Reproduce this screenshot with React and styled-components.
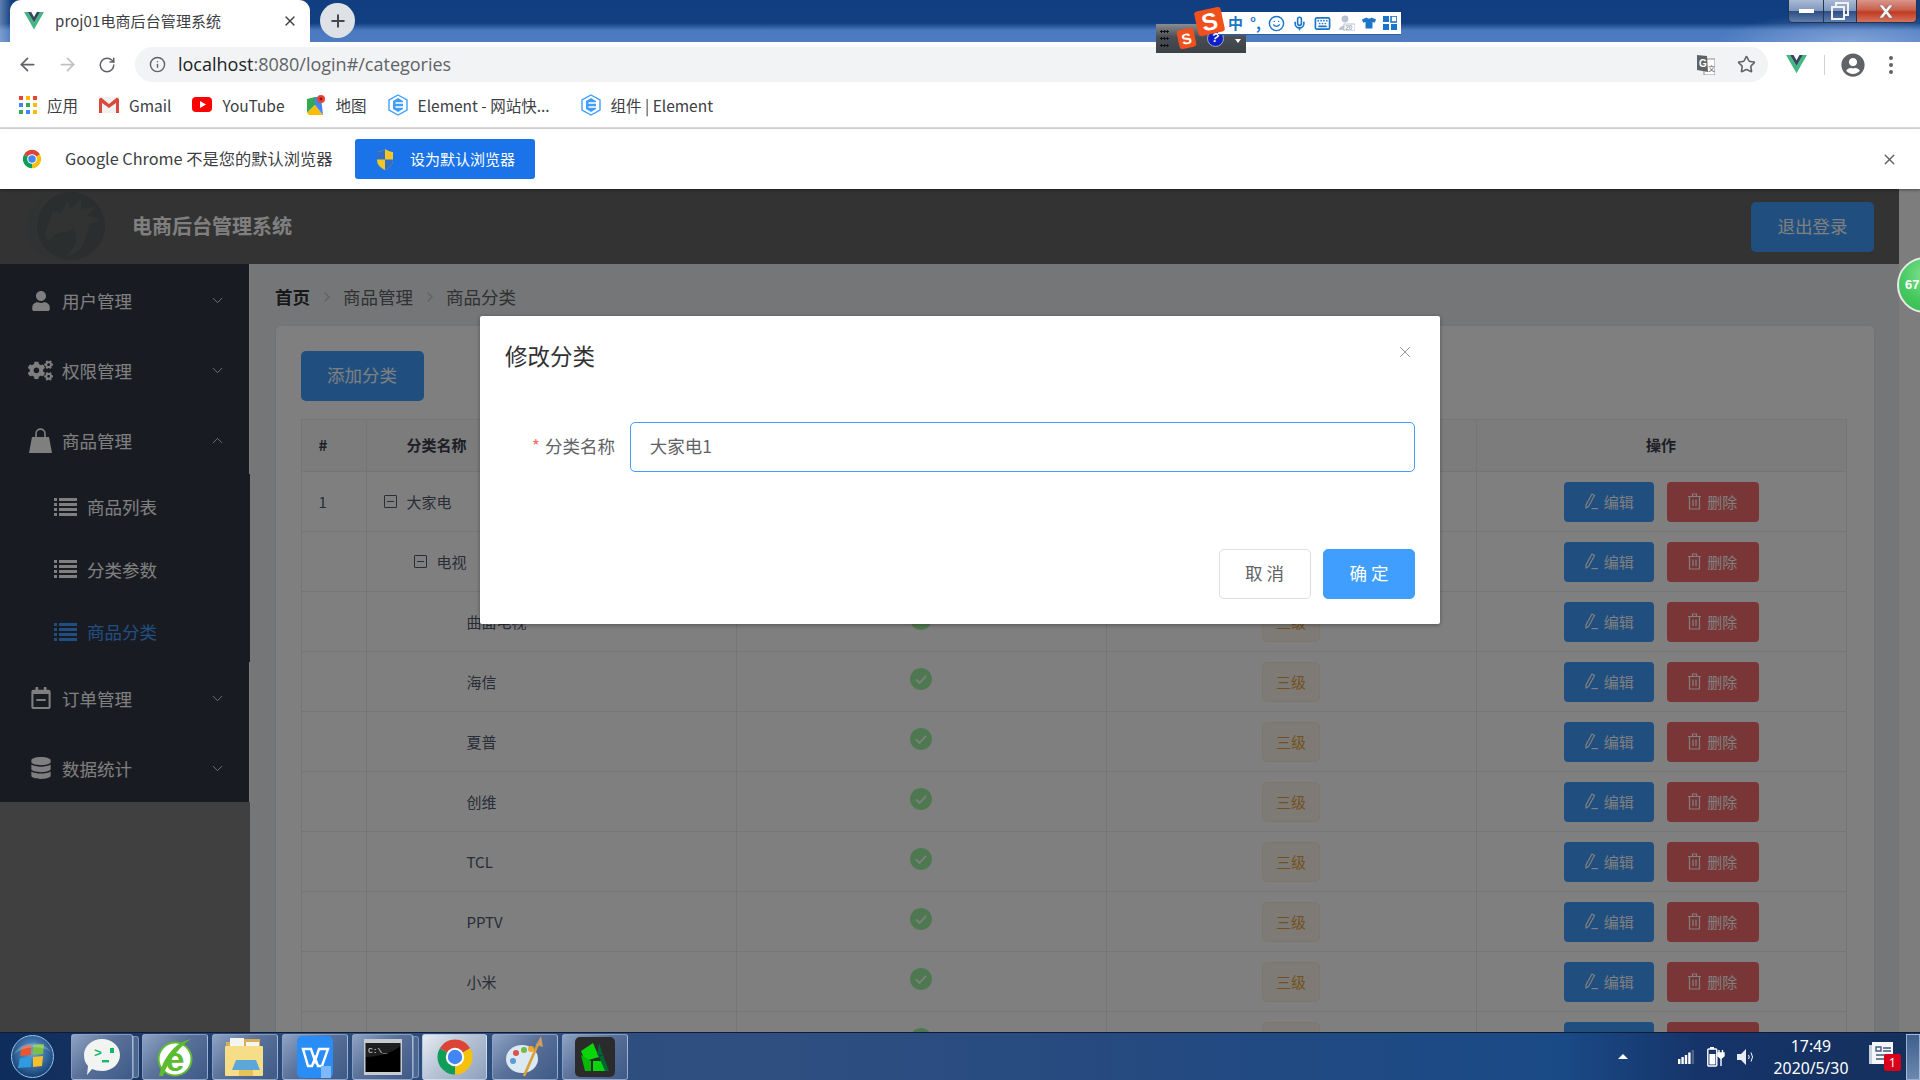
import React from 'react';
import styled, { createGlobalStyle } from 'styled-components';
import { ArrowLeft, ArrowRight, RotateCw, Info, Star, X, ChevronDown, ChevronUp, ChevronRight, Plus, Smile, Mic, Keyboard } from 'lucide-react';
import { FaUser, FaCogs, FaRegCalendarMinus, FaDatabase, FaTshirt, FaUserCircle } from 'react-icons/fa';

const GlobalStyle = createGlobalStyle`
  html, body { margin: 0; padding: 0; overflow: hidden; background: #000; }
  * { box-sizing: border-box; }
  body { font-family: "Noto Sans", "Noto Sans CJK SC", sans-serif; }
`;

const CJK = `"Noto Sans CJK SC", "Noto Sans", sans-serif`;

const Screen = styled.div`
  position: relative;
  width: 1920px;
  height: 1080px;
  display: flex;
  flex-direction: column;
  overflow: hidden;
`;

/* ---------- browser chrome ---------- */

const TabStrip = styled.div`
  height: 42px;
  flex: none;
  display: flex;
  align-items: flex-start;
  padding-left: 10px;
  background:
    radial-gradient(ellipse 130px 30px at 1850px 42px, rgba(190, 210, 240, 0.45), transparent),
    linear-gradient(90deg, rgba(170, 190, 220, 0.5) 0, transparent 12px),
    linear-gradient(180deg, #103e80 0, #113f81 55%, #4a79bf 72%, #4f7dc2 100%);
`;

const Tab = styled.div`
  width: 300px;
  height: 42px;
  background: #fff;
  border-radius: 11px 11px 0 0;
  display: flex;
  align-items: center;
  padding: 0 12px 0 14px;
  font-size: 15px;
  color: #3c4043;
  font-family: ${CJK};
`;

const TabTitle = styled.span`
  flex: 1;
  margin-left: 11px;
  padding-bottom: 2px;
  letter-spacing: 0.1px;
  white-space: nowrap;
`;

const NewTab = styled.div`
  width: 35px;
  height: 35px;
  margin: 3px 0 0 10px;
  border-radius: 50%;
  background: #dee1e6;
  color: #45494e;
  display: flex;
  align-items: center;
  justify-content: center;
`;

const WindowControls = styled.div`
  margin: 0 3px 0 auto;
  width: 129px;
  height: 23px;
  display: flex;
  border: 1px solid #26344e;
  border-top: none;
  border-radius: 0 0 5px 5px;
  overflow: hidden;
`;

const WinButton = styled.div`
  width: ${p => p.$w}px;
  display: flex;
  align-items: center;
  justify-content: center;
  border-right: ${p => (p.$close ? 'none' : '1px solid #26344e')};
  background: ${p => p.$close
    ? 'linear-gradient(180deg, #d9958a 0, #c8604e 45%, #c23a20 55%, #d4735f 100%)'
    : 'linear-gradient(180deg, #a9bad4 0, #7f97bd 48%, #2f4f84 52%, #5e7eae 100%)'};
`;

const Toolbar = styled.div`
  height: 42px;
  flex: none;
  background: #fff;
  display: flex;
  align-items: flex-start;
  padding-top: 5px;
  color: #5f6368;
`;

const NavButton = styled.div`
  width: 40px;
  height: 35px;
  display: flex;
  align-items: center;
  justify-content: center;
  color: ${p => (p.$off ? '#bdc1c6' : '#5f6368')};
`;

const NavGroup = styled.div`
  width: 135px;
  padding-left: 7px;
  display: flex;
`;

const Omnibox = styled.div`
  width: 1633px;
  height: 35px;
  border-radius: 18px;
  background: #f1f3f4;
  display: flex;
  align-items: center;
  padding: 0 12px 0 14px;
`;

const UrlText = styled.div`
  margin-left: 12px;
  padding-bottom: 2px;
  font-size: 18px;
  font-family: "Open Sans", sans-serif;
  color: #5f6368;
  flex: 1;
  b { font-weight: 400; color: #202124; }
`;

const OmniIcons = styled.div`
  display: flex;
  align-items: center;
  gap: 22px;
`;

const ToolIcons = styled.div`
  display: flex;
  align-items: center;
  height: 35px;
  padding-left: 18px;
`;

const ToolDivider = styled.div`
  width: 1px;
  height: 20px;
  background: #d0d2d5;
  margin: 0 16px 0 17px;
`;

const Dots = styled.div`
  margin-left: 24px;
  display: flex;
  flex-direction: column;
  gap: 3px;
  span { width: 4px; height: 4px; border-radius: 50%; background: #5f6368; display: block; }
`;

const BookmarkBar = styled.div`
  height: 45px;
  flex: none;
  background: #fff;
  border-bottom: 2px solid #dcdde0;
  display: flex;
  align-items: center;
  padding: 0 0 2px 19px;
  gap: 21px;
  font-size: 15.5px;
  color: #3c4043;
  font-family: ${CJK};
`;

const Bookmark = styled.div`
  display: flex;
  align-items: center;
  gap: 10px;
  min-width: ${p => p.$minW || 0}px;
  white-space: nowrap;
`;

const Infobar = styled.div`
  height: 60px;
  flex: none;
  background: #fff;
  display: flex;
  align-items: center;
  padding-left: 21px;
  font-family: ${CJK};
  font-size: 16.25px;
  color: #3c4043;
  position: relative;
  z-index: 1;
  box-shadow: 0 1px 3px rgba(0, 0, 0, 0.4);
`;

const InfoText = styled.span`
  width: 290px;
  margin-left: 22px;
  padding-bottom: 2px;
  white-space: nowrap;
`;

const DefaultButton = styled.div`
  width: 180px;
  height: 40px;
  border-radius: 3px;
  background: #1a73e8;
  color: #fff;
  display: flex;
  align-items: center;
  padding: 0 0 0 21px;
  gap: 16px;
  font-size: 15px;
  span { padding-bottom: 2px; }
`;

const InfoClose = styled.div`
  margin-left: auto;
  margin-right: 22px;
  color: #5f6368;
  display: flex;
`;

/* ---------- sogou ime bar, floats above the browser ---------- */

const ImeDock = styled.div`
  position: absolute;
  left: 1156px;
  top: 24px;
  width: 90px;
  height: 29px;
  background: linear-gradient(180deg, #8a8c90 0, #4a4e54 45%, #3c4047 100%);
  display: flex;
  align-items: center;
  padding-left: 4px;
  z-index: 5;
`;

const ImeGrip = styled.div`
  width: 9px;
  height: 21px;
  background: radial-gradient(circle, #111 1px, transparent 1.3px) 0 0 / 3px 7px;
`;

const ImeSmallS = styled.div`
  width: 17px;
  height: 19px;
  margin-left: 9px;
  border-radius: 3px;
  transform: rotate(-12deg);
  background: #f0501c;
  color: #fff;
  font: 700 15px/19px "Liberation Sans", sans-serif;
  text-align: center;
`;

const ImeHelp = styled.div`
  width: 17px;
  height: 17px;
  margin-left: 12px;
  border-radius: 50%;
  background: #1020c8;
  color: #fff;
  border: 1px solid #aab;
  font: italic 700 12px/15px "Liberation Sans", sans-serif;
  text-align: center;
`;

const ImeArrow = styled.div`
  width: 0;
  height: 0;
  margin-left: 11px;
  border: 3px solid transparent;
  border-top: 4px solid #fff;
  margin-top: 8px;
`;

const ImeBar = styled.div`
  position: absolute;
  left: 1218px;
  top: 12px;
  width: 183px;
  height: 22px;
  background: #fff;
  box-shadow: 0 1px 0 #2f5f9f;
  display: flex;
  align-items: center;
  padding-left: 10px;
  gap: 7px;
  color: #1b75c9;
  z-index: 6;
`;

const ImeLogo = styled.div`
  position: absolute;
  left: 1196px;
  top: 9px;
  width: 27px;
  height: 25px;
  border-radius: 3px;
  transform: rotate(-12deg);
  background: #f0501c;
  color: #fff;
  font: 700 24px/25px "Liberation Sans", sans-serif;
  text-align: center;
  z-index: 7;
`;

const ImeLabel = styled.span`
  font: 700 15px/22px ${CJK};
  white-space: nowrap;
`;

/* ---------- the admin page ---------- */

const PageArea = styled.div`
  position: relative;
  flex: 1;
  min-height: 0;
  display: flex;
  overflow: hidden;
  background: #fafafa;
`;

const AppColumn = styled.div`
  width: 1899px;
  flex: none;
  display: flex;
  flex-direction: column;
`;

const AppHeader = styled.header`
  height: 75px;
  flex: none;
  background: #666;
  display: flex;
  align-items: center;
  padding: 0 25px;
`;

const AppTitle = styled.div`
  margin-left: 25px;
  padding-bottom: 2px;
  font: 700 20px ${CJK};
  color: #fff;
`;

const BlockButton = styled.div`
  height: ${p => p.$h || 50}px;
  width: ${p => p.$w || 123}px;
  border-radius: 5px;
  background: #409eff;
  color: #fff;
  font: 17.5px ${CJK};
  padding-bottom: 3px;
  display: flex;
  align-items: center;
  justify-content: center;
  flex: none;
`;

const LogoutButton = styled(BlockButton)`
  margin-left: auto;
`;

const AppBody = styled.div`
  flex: 1;
  min-height: 0;
  display: flex;
`;

const Sidebar = styled.aside`
  width: 250px;
  flex: none;
  display: flex;
  flex-direction: column;
`;

const MenuItem = styled.div`
  width: 249px;
  height: 70px;
  background: #333744;
  color: #fff;
  display: flex;
  align-items: center;
  padding: 3px 23px 0 28px;
  font: 17.5px ${CJK};
`;

const MenuIcon = styled.span`
  width: 25px;
  margin-right: 9px;
  display: flex;
  justify-content: center;
`;

const MenuLabel = styled.span`
  flex: 1;
`;

const SubItem = styled.div`
  width: 250px;
  height: 62.5px;
  background: #333744;
  color: ${p => (p.$active ? '#409eff' : '#fff')};
  display: flex;
  align-items: center;
  padding: 3px 0 0 54px;
  gap: 10px;
  font: 17.5px ${CJK};
`;

const SideFiller = styled.div`
  flex: 1;
  background: #808080;
`;

const Main = styled.main`
  flex: 1;
  min-width: 0;
  background: #eaedf1;
  padding: 24px 25.5px 0;
`;

const Breadcrumb = styled.nav`
  display: flex;
  align-items: center;
  height: 18px;
  margin: 0 0 20px -0.5px;
  font: 17.5px/18px ${CJK};
  color: #606266;
  b { color: #303133; font-weight: 700; }
`;

const CrumbSep = styled.span`
  width: 33px;
  display: flex;
  justify-content: center;
  color: #c0c4cc;
`;

const Card = styled.section`
  background: #fff;
  border-radius: 5px;
  padding: 25px;
  box-shadow: 0 1px 2px rgba(0, 0, 0, 0.15);
`;

const Table = styled.div`
  margin-top: 18px;
  width: 1546px;
  border-top: 1px solid #e9eaec;
  border-left: 1px solid #e9eaec;
  border-right: 1px solid #e9eaec;
`;

const Row = styled.div`
  display: grid;
  grid-template-columns: 65px 370px 370px 370px 369px;
  height: ${p => (p.$head ? 52 : 60)}px;
  border-bottom: 1px solid #e9eaec;
  background: ${p => (p.$head ? '#f8f8f9' : '#fff')};
  font: ${p => (p.$head ? 700 : 400)} 15px ${CJK};
  color: ${p => (p.$head ? '#3c3f4d' : '#515a6e')};
`;

const Cell = styled.div`
  display: flex;
  align-items: center;
  justify-content: ${p => (p.$center ? 'center' : 'flex-start')};
  padding-left: ${p => p.$indent || 0}px;
  padding-bottom: ${p => (p.$head ? 2 : 0)}px;
  border-right: ${p => (p.$last ? 'none' : '1px solid #e9eaec')};
  gap: ${p => p.$gap || 0}px;
  min-width: 0;
`;

const TreeBox = styled.span`
  width: 13px;
  height: 13px;
  border: 1px solid #515a6e;
  border-radius: 1px;
  display: flex;
  align-items: center;
  justify-content: center;
  &::before { content: ""; width: 7px; height: 1px; background: #515a6e; }
`;

const CheckIcon = styled.svg`
  width: 22px;
  height: 22px;
  margin-bottom: 6px;
`;

const LevelTag = styled.span`
  width: 58px;
  height: 40px;
  border-radius: 5px;
  border: 1px solid ${p => p.$tone.border};
  background: ${p => p.$tone.bg};
  color: ${p => p.$tone.text};
  display: flex;
  align-items: center;
  justify-content: center;
`;

const ActionButton = styled.div`
  width: ${p => p.$w}px;
  height: 40px;
  border-radius: 4px;
  background: ${p => p.$bg};
  color: #fff;
  display: flex;
  align-items: center;
  justify-content: center;
  gap: 6px;
  font-size: 15px;
`;

const ActionCell = styled(Cell)`
  gap: 12.5px;
  padding-left: 1px;
`;

const ScrollTrack = styled.div`
  flex: 1;
  background: #fafafa;
`;

/* ---------- modal ---------- */

const Overlay = styled.div`
  position: absolute;
  inset: 0;
  background: rgba(0, 0, 0, 0.5);
  z-index: 2;
  padding-top: 127px;
`;

const Dialog = styled.div`
  position: relative;
  width: 960px;
  margin: 0 auto;
  background: #fff;
  border-radius: 2px;
  box-shadow: 0 1px 4px rgba(0, 0, 0, 0.35);
  font-family: ${CJK};
`;

const DialogHeader = styled.div`
  padding: 24px 25px 13.5px;
  font-size: 22.5px;
  line-height: 30px;
  color: #303133;
`;

const DialogClose = styled.div`
  position: absolute;
  top: 27px;
  right: 26px;
  display: flex;
  color: #909399;
`;

const DialogBody = styled.div`
  padding: 38px 25px 77px;
  display: flex;
  align-items: center;
`;

const FieldLabel = styled.label`
  width: 125px;
  flex: none;
  padding: 0 15px 2px 0;
  text-align: right;
  font-size: 17.5px;
  color: #606266;
  &::before { content: "*"; color: #f56c6c; margin-right: 5px; }
`;

const FieldInput = styled.input`
  flex: 1;
  height: 50px;
  border: 1.25px solid #409eff;
  border-radius: 5px;
  padding: 0 18.75px 2px;
  font: 17.5px ${CJK};
  color: #606266;
  outline: none;
`;

const DialogFooter = styled.div`
  padding: 0 25px 25px;
  display: flex;
  justify-content: flex-end;
  gap: 12.5px;
`;

const DialogButton = styled.div`
  width: 92px;
  height: 50px;
  border-radius: 5px;
  border: 1.25px solid ${p => (p.$primary ? '#409eff' : '#dcdfe6')};
  background: ${p => (p.$primary ? '#409eff' : '#fff')};
  color: ${p => (p.$primary ? '#fff' : '#606266')};
  font-size: 17.5px;
  padding-bottom: 2px;
  white-space: pre;
  display: flex;
  align-items: center;
  justify-content: center;
`;

const SpeedBall = styled.div`
  position: absolute;
  left: 1897px;
  top: 68px;
  width: 56px;
  height: 56px;
  border-radius: 50%;
  border: 2px solid #e8e8e8;
  background: radial-gradient(circle at 50% 30%, #7fe08f 0, #45c95f 55%, #35b850 100%);
  color: #fff;
  font: 700 13px/52px "Liberation Sans", sans-serif;
  padding-left: 6px;
  z-index: 3;
`;

/* ---------- windows taskbar ---------- */

const Taskbar = styled.div`
  height: 48px;
  flex: none;
  display: flex;
  align-items: center;
  border-top: 1px solid #0d1d38;
  background:
    linear-gradient(90deg, #0e2c5c 0, #14305e 70px, #2c4c7c 300px, #2f4f80 760px, #264a80 1100px, #1a4a86 1560px, #16346a 1700px, #14305c 1920px);
  position: relative;
  z-index: 4;
`;

const StartArea = styled.div`
  width: 71px;
  flex: none;
  display: flex;
  justify-content: center;
  padding-right: 6px;
`;

const TaskButton = styled.div`
  position: relative;
  width: ${p => p.$w}px;
  height: 46px;
  margin-right: ${p => p.$gap}px;
  flex: none;
  border: 1px solid rgba(200, 215, 240, 0.5);
  border-radius: 3px;
  display: flex;
  align-items: center;
  justify-content: center;
  background: ${p => (p.$active
    ? 'linear-gradient(135deg, #e6ebf2 0, #b8c4d6 45%, #8ea0bc 100%)'
    : 'linear-gradient(135deg, #8ea3c4 0, #5a7199 45%, #3e5a88 100%)')};
  ${p => p.$stacked && `
    &::after {
      content: "";
      position: absolute;
      top: 1px;
      bottom: 1px;
      right: -7px;
      width: 4px;
      border: 1px solid rgba(200, 215, 240, 0.4);
      border-radius: 0 3px 3px 0;
      background: #4b668f;
    }
  `}
`;

const Tray = styled.div`
  margin-left: auto;
  display: flex;
  align-items: center;
  color: #fff;
  height: 100%;
`;

const TrayArrow = styled.div`
  width: 0;
  height: 0;
  border: 5px solid transparent;
  border-bottom: 5px solid #fff;
  border-top: none;
  margin-right: 50px;
`;

const TrayIcon = styled.div`
  display: flex;
  margin-right: ${p => p.$gap}px;
`;

const Clock = styled.div`
  width: 90px;
  text-align: center;
  font-size: 15.75px;
  line-height: 22px;
  margin-right: 13px;
  padding-top: 1px;
`;

const Notify = styled.div`
  position: relative;
  width: 34px;
  height: 30px;
  display: flex;
  align-items: flex-start;
`;

const NotifyBadge = styled.span`
  position: absolute;
  left: 15px;
  top: 12px;
  width: 17px;
  height: 17px;
  background: #d9001b;
  border-radius: 2px;
  font-size: 12px;
  line-height: 17px;
  text-align: center;
`;

const ShowDesktop = styled.div`
  width: 14px;
  height: 46px;
  margin-left: 3px;
  border: 1px solid rgba(210, 225, 245, 0.6);
  background: linear-gradient(180deg, #3f5f8c, #6c88b0);
`;

/* ---------- drawn icons and logos ---------- */

const VueLogo = ({ size = 20 }) => (
  <svg width={size} height={size * 0.87} viewBox="0 0 24 21">
    <polygon points="0,0 4.6,0 12,12.6 19.4,0 24,0 12,21" fill="#41b883" />
    <polygon points="4.6,0 8.6,0 12,6 15.4,0 19.4,0 12,12.6" fill="#34495e" />
  </svg>
);

const ChromeLogo = ({ size = 22 }) => (
  <svg width={size} height={size} viewBox="0 0 48 48">
    <path d="M24 24 L6.68 14 A20 20 0 0 1 41.32 14 Z" fill="#db4437" />
    <path d="M24 24 L41.32 14 A20 20 0 0 1 24 44 Z" fill="#f4c20d" />
    <path d="M24 24 L24 44 A20 20 0 0 1 6.68 14 Z" fill="#0f9d58" />
    <circle cx="24" cy="24" r="10.5" fill="#fff" />
    <circle cx="24" cy="24" r="8.2" fill="#4285f4" />
  </svg>
);

const AppsGrid = () => {
  const colors = ['#ea4335', '#fbbc05', '#ea4335', '#4285f4', '#34a853', '#fbbc05', '#34a853', '#4285f4', '#fbbc05'];
  return (
    <svg width="18" height="18" viewBox="0 0 18 18">
      {colors.map((c, i) => (
        <rect key={i} x={(i % 3) * 7} y={Math.floor(i / 3) * 7} width="4" height="4" fill={c} />
      ))}
    </svg>
  );
};

const GmailIcon = () => (
  <svg width="20" height="16" viewBox="0 0 20 16">
    <rect width="20" height="16" rx="1" fill="#f1f1f1" />
    <path d="M0 2 V16 H3 V6 L10 11 L17 6 V16 H20 V2 L18 0.5 L10 7 L2 0.5 Z" fill="#d9493c" />
  </svg>
);

const YoutubeIcon = () => (
  <svg width="20" height="15" viewBox="0 0 20 15">
    <rect width="20" height="15" rx="4" fill="#f00" />
    <polygon points="8,4 8,11 14,7.5" fill="#fff" />
  </svg>
);

const MapsIcon = () => (
  <svg width="20" height="20" viewBox="0 0 20 20">
    <polygon points="1,4 9,2 9,10 1,18" fill="#34a853" />
    <polygon points="1,18 9,10 17,20 3,20" fill="#fbbc05" />
    <polygon points="9,2 15,2 17,20 9,10" fill="#4285f4" />
    <circle cx="15" cy="4" r="4" fill="#ea4335" />
    <circle cx="15" cy="4" r="1.4" fill="#8a1c14" />
  </svg>
);

const ElementLogo = () => (
  <svg width="20" height="22" viewBox="0 0 20 22">
    <polygon points="10,1 19,6 19,16 10,21 1,16 1,6" fill="#fff" stroke="#409eff" strokeWidth="1.4" />
    <polygon points="10,4 15,7 15,15 10,18 5,15 5,7" fill="#409eff" />
    <path d="M7.5 9 H15 M7.5 13 H15" stroke="#fff" strokeWidth="1.6" />
  </svg>
);

const ShieldIcon = () => (
  <svg width="18" height="21" viewBox="0 0 18 21">
    <path d="M9 0 C6 2 3 3 1 3 V11 C1 16 5 19 9 21 C13 19 17 16 17 11 V3 C15 3 12 2 9 0 Z" fill="#f3c623" />
    <path d="M9 0 C6 2 3 3 1 3 V10.5 H9 Z" fill="#2f6fc9" />
    <path d="M9 10.5 H17 V11 C17 16 13 19 9 21 Z" fill="#2f6fc9" />
  </svg>
);

const TranslateIcon = () => (
  <svg width="18" height="20" viewBox="0 0 18 20">
    <rect x="7" y="4" width="11" height="16" fill="#fff" stroke="#8a8d91" />
    <polygon points="0,0 10,1 11,17 0,15" fill="#5f6368" />
    <text x="2" y="12" fontSize="10" fontWeight="700" fill="#fff" fontFamily="Liberation Sans">G</text>
    <text x="11" y="16" fontSize="7" fill="#5f6368" fontFamily="Noto Sans CJK SC">文</text>
  </svg>
);

const ListIcon = () => (
  <svg width="23" height="18" viewBox="0 0 23 18" fill="currentColor">
    {[0, 5, 10, 15].map(y => (
      <React.Fragment key={y}>
        <rect x="0" y={y} width="3" height="3" />
        <rect x="5" y={y} width="18" height="3" />
      </React.Fragment>
    ))}
  </svg>
);

const BagIcon = () => (
  <svg width="23" height="25" viewBox="0 0 23 25" fill="currentColor">
    <path d="M3 9 H20 L23 25 H0 Z" />
    <path d="M7 12 V6 C7 -0.5 16 -0.5 16 6 V12" fill="none" stroke="currentColor" strokeWidth="1.6" />
  </svg>
);

const EditIcon = () => (
  <svg width="13" height="17" viewBox="0 0 13 17" fill="none" stroke="#fff" strokeWidth="1.2">
    <path d="M7 1 L9.5 2.5 L3.5 13.5 L1 15 L1 12 Z" />
    <path d="M6.5 15.6 H13" />
  </svg>
);

const TrashIcon = () => (
  <svg width="13" height="17" viewBox="0 0 13 17" fill="none" stroke="#fff" strokeWidth="1.2">
    <path d="M0 3.5 H13 M4.5 3.5 V1 H8.5 V3.5 M1.5 3.5 V16 H11.5 V3.5 M5 6.5 V13 M8 6.5 V13" />
  </svg>
);

const SuccessIcon = () => (
  <CheckIcon viewBox="0 0 22 22">
    <circle cx="11" cy="11" r="11" fill="#9cf2a0" />
    <path d="M6 11.5 L9.6 15 L16 7.8" fill="none" stroke="#fff" strokeWidth="1.8" />
  </CheckIcon>
);

const HorseLogo = () => (
  <svg width="82" height="71" viewBox="0 0 82 71">
    <path d="M24 3 C6 10 -3 32 4 50 C11 66 30 72 46 68 C34 68 18 60 12 44 C7 28 13 12 24 3 Z" fill="#5f6666" />
    <circle cx="46" cy="35" r="34" fill="#555c5c" />
    <path d="M20 42 L28 20 L36 22 L42 10 L46 17 L56 8 L56 18 L70 16 L62 25 L76 28 L64 34 L60 48 C58 58 50 64 40 66 C52 56 54 46 48 36 C44 44 36 38 28 46 L23 50 Z" fill="#626666" />
  </svg>
);

const ImeUserIcon = () => (
  <svg width="17" height="16" viewBox="0 0 17 16">
    <circle cx="7" cy="4" r="3.4" fill="#b9c3d2" />
    <path d="M1 15 C1 9 13 9 13 15 Z" fill="#b9c3d2" />
    <rect x="6" y="9" width="11" height="7" fill="#fff" stroke="#b9c3d2" />
    <text x="7.2" y="15" fontSize="6.5" fontWeight="700" fill="#a3afc0" fontFamily="Liberation Sans">20</text>
  </svg>
);

const OrbIcon = () => (
  <svg width="43" height="43" viewBox="0 0 43 43">
    <defs>
      <radialGradient id="orbFill" cx="50%" cy="40%" r="60%">
        <stop offset="0%" stopColor="#6aa6dc" />
        <stop offset="100%" stopColor="#123e72" />
      </radialGradient>
    </defs>
    <circle cx="21.5" cy="21.5" r="21" fill="url(#orbFill)" stroke="#9cc3e6" strokeWidth="1" />
    <polygon points="11,12 20,10 20,20 9,21" fill="#e8552e" />
    <polygon points="22,10 33,9 32,19 22,20" fill="#7cc043" />
    <polygon points="9,23 20,22 20,32 7,33" fill="#2f9be0" />
    <polygon points="22,22 32,21 31,31 22,32" fill="#f6c02c" />
    <path d="M3 19 C10 6 32 4 40 17 C30 10 14 11 3 19 Z" fill="#fff" opacity="0.22" />
  </svg>
);

const ChatIcon = () => (
  <svg width="40" height="40" viewBox="0 0 40 40">
    <path d="M20 2 C30 2 38 9 38 18 C38 27 30 34 20 34 C16 34 13 33 10 32 L5 38 L6 29 C3 26 2 22 2 18 C2 9 10 2 20 2 Z" fill="#f2f4f2" />
    <text x="12" y="20" fontSize="13" fontWeight="700" fill="#14b86a" fontFamily="Liberation Mono">&gt;</text>
    <rect x="28" y="11" width="4" height="5" fill="#14b86a" />
    <rect x="20" y="23" width="7" height="2.4" fill="#14b86a" />
  </svg>
);

const IeIcon = () => (
  <svg width="40" height="42" viewBox="0 0 40 42">
    <ellipse cx="20" cy="23" rx="16.5" ry="16.5" fill="#fff" stroke="#5cbb2e" strokeWidth="2" />
    <text x="20" y="35" textAnchor="middle" fontSize="34" fontWeight="700" fill="#5cbb2e" fontFamily="Liberation Sans">e</text>
    <path d="M4 40 C8 22 20 6 36 3 C28 8 14 22 8 40 Z" fill="#5cbb2e" />
  </svg>
);

const FolderIcon = () => (
  <svg width="42" height="42" viewBox="0 0 42 42">
    <path d="M2 6 H16 L19 3 H36 V40 H2 Z" fill="#d9ae55" />
    <rect x="6" y="2" width="14" height="8" fill="#f5f5f0" />
    <rect x="22" y="6" width="13" height="7" fill="#f5f5f0" />
    <rect x="1" y="10" width="38" height="30" rx="1" fill="#f6dd88" />
    <path d="M8 34 L12 24 H32 L36 34 Z" fill="#5aa7d8" />
    <rect x="15" y="34" width="14" height="6" fill="#e7c159" />
  </svg>
);

const WpsIcon = () => (
  <svg width="36" height="42" viewBox="0 0 36 42">
    <rect width="36" height="42" rx="5" fill="#2a8cf5" />
    <path d="M6 13 H14 L18 25 L22 13 H31 L25 30 H21 L18 22 L15 30 H11 Z" fill="none" stroke="#fff" strokeWidth="2.4" />
    <rect x="24" y="30" width="10" height="12" fill="#7cb8fb" />
  </svg>
);

const CmdIcon = () => (
  <svg width="38" height="36" viewBox="0 0 38 36">
    <rect width="38" height="36" fill="#c8ccd0" />
    <rect x="1.5" y="4" width="35" height="29" fill="#000" />
    <text x="4" y="14" fontSize="8" fill="#e6e6e6" fontFamily="Liberation Mono">C:\_</text>
    <path d="M1.5 33 V18 C14 18 28 14 36.5 7 V4 H1.5 Z" fill="#fff" opacity="0.12" />
  </svg>
);

const PaletteIcon = () => (
  <svg width="42" height="42" viewBox="0 0 42 42">
    <ellipse cx="18" cy="23" rx="16" ry="14" fill="#dce8f2" />
    <circle cx="12" cy="17" r="3" fill="#d9534f" />
    <circle cx="20" cy="14" r="3" fill="#73b84a" />
    <circle cx="9" cy="25" r="3" fill="#5a9bd8" />
    <circle cx="27" cy="13" r="3" fill="#f0a92c" />
    <path d="M20 40 L34 8" stroke="#d9a13a" strokeWidth="2.6" />
    <path d="M32 9 L37 0 L39 11 Z" fill="#cf9d5f" />
  </svg>
);

const GreenAppIcon = () => (
  <svg width="40" height="40" viewBox="0 0 40 40">
    <rect width="40" height="40" rx="5" fill="#2b2b2b" />
    <polygon points="6,14 18,6 24,20 10,24" fill="#0ad40a" />
    <polygon points="6,18 16,24 16,34 10,34" fill="#08b808" />
    <polygon points="18,24 28,24 32,34 18,34" fill="#0ad40a" />
    <polygon points="24,6 28,18 22,18" fill="#063" />
    <polygon points="28,18 34,34 30,34 24,20" fill="#063" />
  </svg>
);

const SignalIcon = () => (
  <svg width="16" height="14" viewBox="0 0 16 14">
    <rect x="0" y="9" width="2.4" height="5" fill="#fff" />
    <rect x="3.4" y="7" width="2.4" height="7" fill="#fff" />
    <rect x="6.8" y="5" width="2.4" height="9" fill="#fff" />
    <rect x="10.2" y="2.5" width="2.4" height="11.5" fill="#fff" />
    <rect x="13.6" y="0" width="2.4" height="14" fill="#4d6488" />
  </svg>
);

const BatteryIcon = () => (
  <svg width="18" height="20" viewBox="0 0 18 20">
    <rect x="0.8" y="2" width="9" height="17" rx="1" fill="none" stroke="#fff" strokeWidth="1.4" />
    <rect x="3" y="0" width="4" height="2" fill="#fff" />
    <rect x="2.4" y="7" width="6" height="10.5" fill="#fff" />
    <path d="M12 3 V6 M15.5 3 V6 M11 6 H17 V9 L14.5 11 H13.5 L11 9 Z M14 11 V19" stroke="#fff" strokeWidth="1.4" fill="#fff" />
  </svg>
);

const SpeakerIcon = () => (
  <svg width="18" height="18" viewBox="0 0 18 18">
    <polygon points="0,6 4,6 9,1 9,17 4,12 0,12" fill="#e8ecf2" />
    <path d="M11.5 7 Q13 9 11.5 11 M14 4.5 Q17 9 14 13.5" fill="none" stroke="#fff" strokeWidth="1" />
  </svg>
);

const NotifyIcon = () => (
  <svg width="24" height="23" viewBox="0 0 24 23">
    <rect x="0" y="3" width="4" height="19" fill="#c6cfdc" />
    <rect x="3" y="0" width="21" height="22" fill="#f4f6f9" />
    <path d="M7 5 H12 V9 H7 Z M14 6 H22 M14 9 H22 M7 13 H22 M7 17 H16" stroke="#44597c" strokeWidth="1.4" fill="none" />
  </svg>
);

/* ---------- data ---------- */

const menus = [
  { name: '用户管理', icon: <FaUser size={20} /> },
  { name: '权限管理', icon: <FaCogs size={25} /> },
  {
    name: '商品管理',
    icon: <BagIcon />,
    open: true,
    children: [
      { name: '商品列表' },
      { name: '分类参数' },
      { name: '商品分类', active: true },
    ],
  },
  { name: '订单管理', icon: <FaRegCalendarMinus size={22} /> },
  { name: '数据统计', icon: <FaDatabase size={22} /> },
];

const tones = {
  一级: { bg: '#ecf5ff', border: '#d9ecff', text: '#409eff' },
  二级: { bg: '#f0f9eb', border: '#e1f3d8', text: '#67c23a' },
  三级: { bg: '#fdf6ec', border: '#faecd8', text: '#e6a23c' },
};

const rows = [
  { index: 1, name: '大家电', level: '一级', indent: 17, tree: true },
  { name: '电视', level: '二级', indent: 47, tree: true },
  { name: '曲面电视', level: '三级', indent: 100 },
  { name: '海信', level: '三级', indent: 100 },
  { name: '夏普', level: '三级', indent: 100 },
  { name: '创维', level: '三级', indent: 100 },
  { name: 'TCL', level: '三级', indent: 100 },
  { name: 'PPTV', level: '三级', indent: 100 },
  { name: '小米', level: '三级', indent: 100 },
  { name: '海尔', level: '三级', indent: 100 },
];

const taskButtons = [
  { w: 62, gap: 9, icon: <ChatIcon />, stacked: true },
  { w: 66, gap: 4, icon: <IeIcon /> },
  { w: 66, gap: 4, icon: <FolderIcon /> },
  { w: 66, gap: 4, icon: <WpsIcon /> },
  { w: 61, gap: 9, icon: <CmdIcon />, stacked: true },
  { w: 65, gap: 5, icon: <ChromeLogo size={42} />, active: true },
  { w: 66, gap: 4, icon: <PaletteIcon /> },
  { w: 66, gap: 0, icon: <GreenAppIcon /> },
];

const App = () => (
  <Screen>
    <GlobalStyle />

    <TabStrip>
      <Tab>
        <VueLogo />
        <TabTitle>proj01电商后台管理系统</TabTitle>
        <X size={16} strokeWidth={2} />
      </Tab>
      <NewTab><Plus size={20} strokeWidth={2.4} /></NewTab>
      <WindowControls>
        <WinButton $w={36}>
          <svg width="15" height="4"><rect width="15" height="4" fill="#fff" /></svg>
        </WinButton>
        <WinButton $w={33}>
          <svg width="18" height="18" viewBox="0 0 18 18" fill="none" stroke="#f2f2f2" strokeWidth="2">
            <path d="M5 4 V1 H17 V13 H13" />
            <rect x="1" y="5" width="12" height="12" />
          </svg>
        </WinButton>
        <WinButton $w={60} $close>
          <svg width="16" height="13" viewBox="0 0 16 13">
            <path d="M1 0 H5 L8 4 L11 0 H15 L10 6.5 L15 13 H11 L8 9 L5 13 H1 L6 6.5 Z" fill="#f4f4f4" stroke="#555" strokeWidth="0.5" />
          </svg>
        </WinButton>
      </WindowControls>
    </TabStrip>

    <Toolbar>
      <NavGroup>
        <NavButton><ArrowLeft size={21} /></NavButton>
        <NavButton $off><ArrowRight size={21} /></NavButton>
        <NavButton><RotateCw size={18} /></NavButton>
      </NavGroup>
      <Omnibox>
        <Info size={17} />
        <UrlText><b>localhost</b>:8080/login#/categories</UrlText>
        <OmniIcons>
          <TranslateIcon />
          <Star size={19} />
        </OmniIcons>
      </Omnibox>
      <ToolIcons>
        <VueLogo size={21} />
        <ToolDivider />
        <FaUserCircle size={24} />
        <Dots><span /><span /><span /></Dots>
      </ToolIcons>
    </Toolbar>

    <BookmarkBar>
      <Bookmark><AppsGrid />应用</Bookmark>
      <Bookmark><GmailIcon />Gmail</Bookmark>
      <Bookmark><YoutubeIcon />YouTube</Bookmark>
      <Bookmark><MapsIcon />地图</Bookmark>
      <Bookmark $minW={172}><ElementLogo />Element - 网站快...</Bookmark>
      <Bookmark><ElementLogo />组件 | Element</Bookmark>
    </BookmarkBar>

    <Infobar>
      <ChromeLogo />
      <InfoText>Google Chrome 不是您的默认浏览器</InfoText>
      <DefaultButton><ShieldIcon /><span>设为默认浏览器</span></DefaultButton>
      <InfoClose><X size={17} /></InfoClose>
    </Infobar>

    <PageArea>
      <AppColumn>
        <AppHeader>
          <HorseLogo />
          <AppTitle>电商后台管理系统</AppTitle>
          <LogoutButton>退出登录</LogoutButton>
        </AppHeader>
        <AppBody>
          <Sidebar>
            {menus.map(menu => (
              <React.Fragment key={menu.name}>
                <MenuItem>
                  <MenuIcon>{menu.icon}</MenuIcon>
                  <MenuLabel>{menu.name}</MenuLabel>
                  {menu.open ? <ChevronUp size={17} strokeWidth={1.2} /> : <ChevronDown size={17} strokeWidth={1.2} />}
                </MenuItem>
                {menu.children && menu.children.map(sub => (
                  <SubItem key={sub.name} $active={sub.active}>
                    <ListIcon />
                    {sub.name}
                  </SubItem>
                ))}
              </React.Fragment>
            ))}
            <SideFiller />
          </Sidebar>
          <Main>
            <Breadcrumb>
              <b>首页</b>
              <CrumbSep><ChevronRight size={16} /></CrumbSep>
              商品管理
              <CrumbSep><ChevronRight size={16} /></CrumbSep>
              商品分类
            </Breadcrumb>
            <Card>
              <BlockButton>添加分类</BlockButton>
              <Table>
                <Row $head>
                  <Cell $head $indent={17}>#</Cell>
                  <Cell $head $indent={40}>分类名称</Cell>
                  <Cell $head $center>是否有效</Cell>
                  <Cell $head $center>排序</Cell>
                  <Cell $head $center $last>操作</Cell>
                </Row>
                {rows.map(row => (
                  <Row key={row.name}>
                    <Cell $indent={17}>{row.index}</Cell>
                    <Cell $indent={row.indent} $gap={10}>
                      {row.tree && <TreeBox />}
                      {row.name}
                    </Cell>
                    <Cell $center><SuccessIcon /></Cell>
                    <Cell $center><LevelTag $tone={tones[row.level]}>{row.level}</LevelTag></Cell>
                    <ActionCell $center $last>
                      <ActionButton $w={90} $bg="#409eff"><EditIcon />编辑</ActionButton>
                      <ActionButton $w={92} $bg="#f56c6c"><TrashIcon />删除</ActionButton>
                    </ActionCell>
                  </Row>
                ))}
              </Table>
            </Card>
          </Main>
        </AppBody>
      </AppColumn>
      <ScrollTrack />

      <Overlay>
        <Dialog>
          <DialogHeader>修改分类</DialogHeader>
          <DialogClose><X size={18} strokeWidth={1.3} /></DialogClose>
          <DialogBody>
            <FieldLabel>分类名称</FieldLabel>
            <FieldInput defaultValue="大家电1" />
          </DialogBody>
          <DialogFooter>
            <DialogButton>取 消</DialogButton>
            <DialogButton $primary>确 定</DialogButton>
          </DialogFooter>
        </Dialog>
      </Overlay>
      <SpeedBall>67</SpeedBall>
    </PageArea>

    <Taskbar>
      <StartArea><OrbIcon /></StartArea>
      {taskButtons.map((btn, i) => (
        <TaskButton key={i} $w={btn.w} $gap={btn.gap} $active={btn.active} $stacked={btn.stacked}>
          {btn.icon}
        </TaskButton>
      ))}
      <Tray>
        <TrayArrow />
        <TrayIcon $gap={13}><SignalIcon /></TrayIcon>
        <TrayIcon $gap={12}><BatteryIcon /></TrayIcon>
        <TrayIcon $gap={11}><SpeakerIcon /></TrayIcon>
        <Clock>17:49<br />2020/5/30</Clock>
        <Notify>
          <NotifyIcon />
          <NotifyBadge>1</NotifyBadge>
        </Notify>
        <ShowDesktop />
      </Tray>
    </Taskbar>

    <ImeDock>
      <ImeGrip />
      <ImeSmallS>S</ImeSmallS>
      <ImeHelp>?</ImeHelp>
      <ImeArrow />
    </ImeDock>
    <ImeBar>
      <ImeLabel>中</ImeLabel>
      <ImeLabel>°,</ImeLabel>
      <Smile size={17} />
      <Mic size={15} strokeWidth={2.6} />
      <Keyboard size={17} strokeWidth={2.4} />
      <ImeUserIcon />
      <FaTshirt size={14} />
      <svg width="14" height="14" viewBox="0 0 14 14" fill="#1b75c9">
        <rect width="6" height="6" />
        <rect x="8" width="6" height="6" fill="none" stroke="#1b75c9" strokeWidth="1.6" />
        <rect y="8" width="6" height="6" />
        <rect x="8" y="8" width="6" height="6" />
      </svg>
    </ImeBar>
    <ImeLogo>S</ImeLogo>
  </Screen>
);

export default App;
